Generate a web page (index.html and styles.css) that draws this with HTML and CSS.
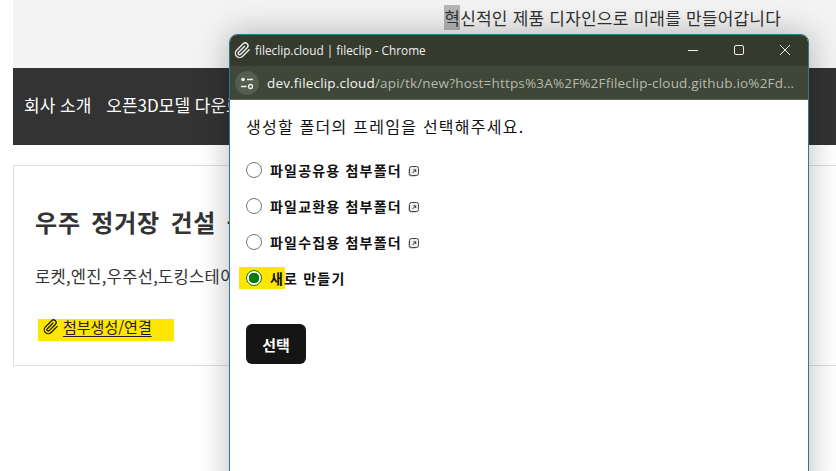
FILE: index.html
```html
<!DOCTYPE html>
<html lang="ko">
<head>
    <meta charset="UTF-8">
    <title>fileclip</title>
    <link rel="stylesheet" href="styles.css">
</head>
<body>

    <div class="page">
        <header class="top">
            <p class="slogan"><span class="sel-gray">혁</span>신적인 제품 디자인으로 미래를 만들어갑니다</p>
        </header>

        <nav class="nav">
            <a>회사 소개</a>
            <a>오픈3D모델 다운로드</a>
        </nav>

        <section class="card">
            <h2>우주 정거장 건설 플랫폼</h2>
            <p class="tags">로켓,엔진,우주선,도킹스테이션,모듈</p>
            <p class="attach">
                <span class="mark">
                    <svg class="clip" width="16" height="16" viewBox="0 0 24 24" fill="none" stroke="#1a1a00" stroke-width="1.9" stroke-linecap="round" stroke-linejoin="round"><path d="M21.4 11.05l-9.2 9.2a6 6 0 0 1-8.5-8.5l9.2-9.2a4 4 0 0 1 5.66 5.66l-9.2 9.2a2 2 0 0 1-2.83-2.83l8.5-8.49"/></svg>
                    <a>첨부생성/연결</a>
                </span>
            </p>
        </section>
    </div>

    <div class="window">
        <div class="titlebar">
            <svg class="clip-w" width="17" height="17" viewBox="0 0 24 24" fill="none" stroke="#f0f0f0" stroke-width="1.9" stroke-linecap="round" stroke-linejoin="round"><path d="M21.4 11.05l-9.2 9.2a6 6 0 0 1-8.5-8.5l9.2-9.2a4 4 0 0 1 5.66 5.66l-9.2 9.2a2 2 0 0 1-2.83-2.83l8.5-8.49"/></svg>
            <span class="title">fileclip.cloud | fileclip - Chrome</span>
            <div class="controls">
                <svg width="46" height="32" viewBox="0 0 46 32"><path d="M18 16.500h10" stroke="#f0f0f0" fill="none"/></svg>
                <svg width="46" height="32" viewBox="0 0 46 32"><rect x="18.500" y="11.500" width="9" height="9" rx="1.500" stroke="#f0f0f0" fill="none"/></svg>
                <svg width="46" height="32" viewBox="0 0 46 32"><path d="M18 11l10 10M28 11l-10 10" stroke="#f0f0f0" fill="none"/></svg>
            </div>
        </div>
        <div class="urlbar">
            <span class="site-btn">
                <svg width="14" height="14" viewBox="0 0 14 14" fill="none" stroke="#f0f0f0" stroke-width="1.3"><circle cx="3" cy="3.500" r="1.800" fill="#f0f0f0" stroke="none"/><path d="M7 3.500h6M1 10.500h5.500"/><circle cx="10.500" cy="10.500" r="2"/></svg>
            </span>
            <span class="url"><b>dev.fileclip.cloud</b>/api/tk/new?host=https%3A%2F%2Ffileclip-cloud.github.io%2Fd...</span>
        </div>
        <div class="content">
            <p class="lead">생성할 폴더의 프레임을 선택해주세요.</p>
            <label class="opt"><input type="radio" name="frame"><strong>파일공유용 첨부폴더</strong><svg class="ext" width="11" height="11" viewBox="0 0 11 11" fill="none"><rect x="0.500" y="2" width="8.500" height="8.500" rx="2" fill="#aaa"/><rect x="1.500" y="0.500" width="9" height="9" rx="2" fill="#eee" stroke="#444"/><path d="M4.500 7l3-3M5.500 3.800h2.200v2.200" stroke="#333"/></svg></label>
            <label class="opt"><input type="radio" name="frame"><strong>파일교환용 첨부폴더</strong><svg class="ext" width="11" height="11" viewBox="0 0 11 11" fill="none"><rect x="0.500" y="2" width="8.500" height="8.500" rx="2" fill="#aaa"/><rect x="1.500" y="0.500" width="9" height="9" rx="2" fill="#eee" stroke="#444"/><path d="M4.500 7l3-3M5.500 3.800h2.200v2.200" stroke="#333"/></svg></label>
            <label class="opt"><input type="radio" name="frame"><strong>파일수집용 첨부폴더</strong><svg class="ext" width="11" height="11" viewBox="0 0 11 11" fill="none"><rect x="0.500" y="2" width="8.500" height="8.500" rx="2" fill="#aaa"/><rect x="1.500" y="0.500" width="9" height="9" rx="2" fill="#eee" stroke="#444"/><path d="M4.500 7l3-3M5.500 3.800h2.200v2.200" stroke="#333"/></svg></label>
            <label class="opt opt-new"><span class="hl"></span><input type="radio" name="frame" checked><strong>새로 만들기</strong></label>
            <button class="select-btn">선택</button>
        </div>
    </div>

</body>
</html>
```

FILE: styles.css
```css
html, body { margin: 0; height: 100%; }
body { font-family: "Noto Sans CJK KR", "Noto Sans", sans-serif; background: white; color: #222; overflow: hidden; position: relative; }
p, h2 { margin: 0; }

.page { padding-left: 13px; }
.top { height: 68px; background: #f3f3f3; display: flex; justify-content: flex-end; padding: 6px 55px 0 0; box-sizing: border-box; }
.slogan { font-size: 17px; line-height: 24px; letter-spacing: 0.2px; color: #333; }
.sel-gray { background: #b5b5b5; }

.nav { height: 77px; background: #333; display: flex; align-items: center; gap: 15px; padding: 0 0 4px 11px; box-sizing: border-box; color: white; font-size: 17px; white-space: nowrap; overflow: hidden; }

.card { margin-top: 20px; height: 201px; box-sizing: border-box; border: 1px solid #ddd; border-right: 0; padding: 40px 0 0 21px; white-space: nowrap; overflow: hidden; }
.card h2 { font-size: 24px; line-height: 32px; letter-spacing: 0.8px; word-spacing: 3px; color: #333; font-weight: 700; }
.tags { font-size: 16.5px; line-height: 24px; letter-spacing: 0.3px; margin-top: 26px; color: #333; }
.attach { margin-top: 28px; }
.mark { display: inline-flex; gap: 4px; width: 136px; height: 22px; background: #ffe600; margin-left: 3px; padding-left: 5px; box-sizing: border-box; font-size: 15px; line-height: 15px; }
.mark a { text-decoration: underline; text-underline-offset: 3px; color: #222; }

.window { position: absolute; left: 229px; top: 34px; width: 580px; height: 460px; box-sizing: border-box; border: 1px solid #2a7a9a; border-radius: 8px 8px 0 0; background: white; box-shadow: 0 0 32px rgba(0,0,0,0.28); overflow: hidden; }
.titlebar { height: 31px; background: #353a2c; display: flex; align-items: center; padding: 0 0 1px 4px; box-sizing: border-box; color: #f0f0f0; font-size: 11.8px; }
.clip-w { margin-right: 4px; }
.title { font-family: "Open Sans", sans-serif; flex: 1; }
.controls { display: flex; }
.urlbar { height: 34px; background: #3f4738; display: flex; align-items: center; padding-left: 5px; border-bottom: 1px solid #5b6053; box-sizing: border-box; }
.site-btn { width: 24px; height: 24px; border-radius: 50%; background: #555d4e; display: flex; align-items: center; justify-content: center; margin-right: 8px; }
.url { font-family: "Open Sans", sans-serif; font-size: 13.5px; letter-spacing: 0.18px; color: #b6baaf; white-space: nowrap; }
.url b { font-weight: 400; color: #f4f4f4; }

.content { padding: 16px 16px; font-size: 14px; color: #111; }
.lead { font-size: 16px; line-height: 21px; letter-spacing: 1.25px; margin-bottom: 15px; }
.opt { display: flex; align-items: center; height: 36px; position: relative; }
.opt input { appearance: none; width: 16px; height: 16px; margin: 0 8px 0 0; border: 1px solid #767676; border-radius: 50%; box-sizing: border-box; position: relative; background: white; }
.opt input:checked { border: 1.500px solid #0a7a0a; background: radial-gradient(circle, #0a7a0a 0 5px, #fff 5.500px); }
.opt strong { font-size: 14px; letter-spacing: 1.2px; }
.ext { margin-left: 6px; margin-top: 3px; }
.hl { position: absolute; left: -7px; top: 7px; width: 46px; height: 22px; background: #ffe600; }
.opt-new strong { position: relative; }
.select-btn { display: block; margin-top: 28px; width: 60px; height: 40px; background: #151515; color: white; border: 0; border-radius: 6px; font-family: inherit; font-size: 15px; font-weight: 700; }
```
